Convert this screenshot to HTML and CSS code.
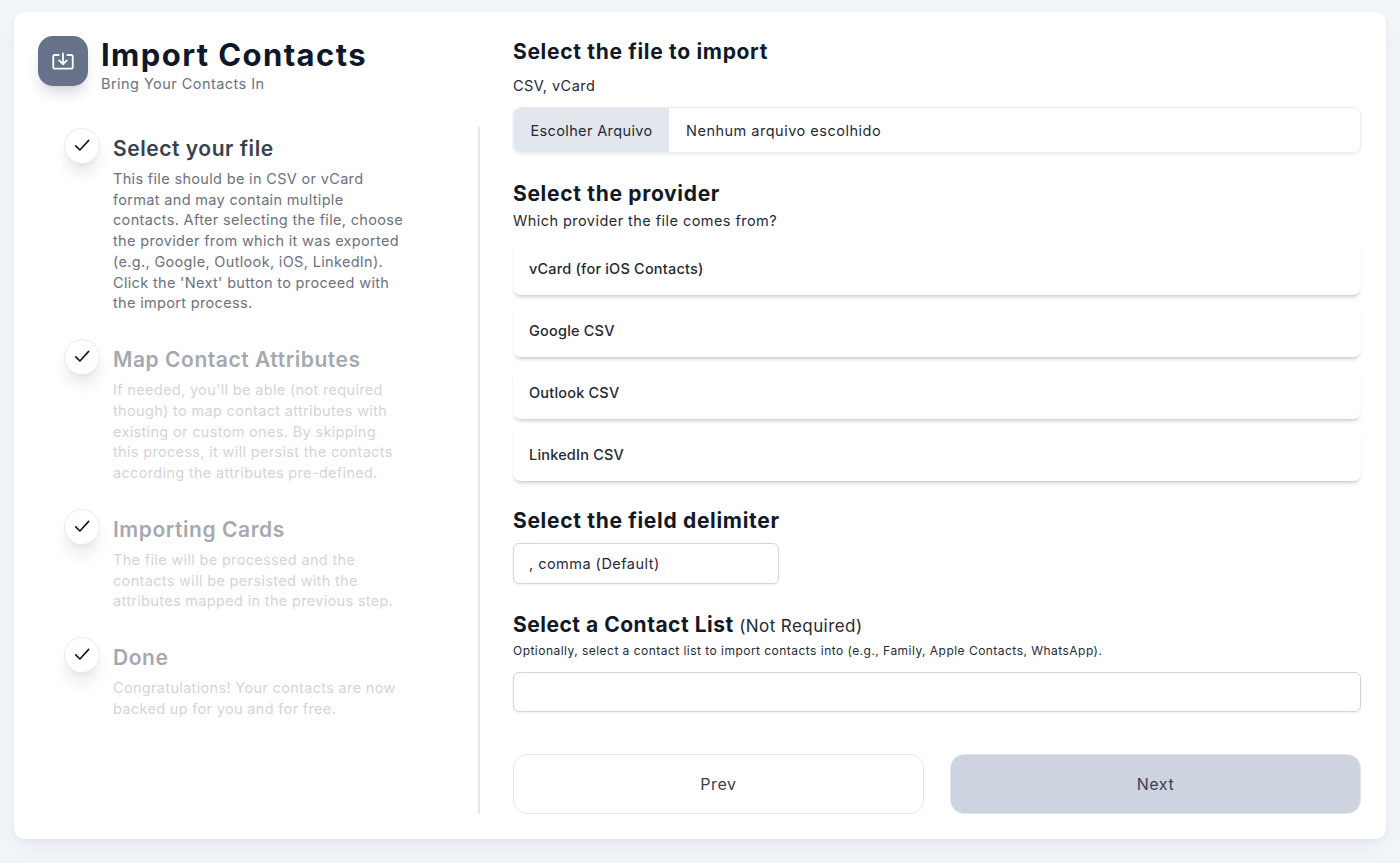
FILE: index.html
```html
<!DOCTYPE html>
<html lang="en">
<head>
<meta charset="utf-8">
<title>Import Contacts</title>
<link rel="stylesheet" href="styles.css">
</head>
<body>
<main class="card">
  <aside class="side">
    <header class="brand">
      <div class="brand-icon">
        <svg viewBox="0 0 24 24" width="26" height="26" fill="none" stroke="#f8fafc" stroke-width="1.7" stroke-linecap="round" stroke-linejoin="round"><path d="M8 6.500H4.500A1.500 1.500 0 0 0 3 8v9.500A1.500 1.500 0 0 0 4.500 19h15a1.500 1.500 0 0 0 1.500-1.500V8a1.500 1.500 0 0 0-1.500-1.500H16"/><path d="M12 5v10M8.500 11.500 12 15l3.500-3.500"/></svg>
      </div>
      <div>
        <h1 class="brand-title">Import Contacts</h1>
        <p class="brand-sub">Bring Your Contacts In</p>
      </div>
    </header>
    <ol class="steps">
      <li class="step">
        <span class="dot"><svg viewBox="0 0 24 24" width="20" height="20" fill="none" stroke="#111827" stroke-width="2" stroke-linecap="round" stroke-linejoin="round"><path d="M4.500 13l5 5L20 6.500"/></svg></span>
        <div class="step-body">
          <h3 class="step-title">Select your file</h3>
          <p class="step-text">This file should be in CSV or vCard<br>format and may contain multiple<br>contacts. After selecting the file, choose<br>the provider from which it was exported<br>(e.g., Google, Outlook, iOS, LinkedIn).<br>Click the 'Next' button to proceed with<br>the import process.</p>
        </div>
      </li>
      <li class="step step-off">
        <span class="dot"><svg viewBox="0 0 24 24" width="20" height="20" fill="none" stroke="#111827" stroke-width="2" stroke-linecap="round" stroke-linejoin="round"><path d="M4.500 13l5 5L20 6.500"/></svg></span>
        <div class="step-body">
          <h3 class="step-title">Map Contact Attributes</h3>
          <p class="step-text">If needed, you'll be able (not required<br>though) to map contact attributes with<br>existing or custom ones. By skipping<br>this process, it will persist the contacts<br>according the attributes pre-defined.</p>
        </div>
      </li>
      <li class="step step-off">
        <span class="dot"><svg viewBox="0 0 24 24" width="20" height="20" fill="none" stroke="#111827" stroke-width="2" stroke-linecap="round" stroke-linejoin="round"><path d="M4.500 13l5 5L20 6.500"/></svg></span>
        <div class="step-body">
          <h3 class="step-title">Importing Cards</h3>
          <p class="step-text">The file will be processed and the<br>contacts will be persisted with the<br>attributes mapped in the previous step.</p>
        </div>
      </li>
      <li class="step step-off">
        <span class="dot"><svg viewBox="0 0 24 24" width="20" height="20" fill="none" stroke="#111827" stroke-width="2" stroke-linecap="round" stroke-linejoin="round"><path d="M4.500 13l5 5L20 6.500"/></svg></span>
        <div class="step-body">
          <h3 class="step-title">Done</h3>
          <p class="step-text">Congratulations! Your contacts are now<br>backed up for you and for free.</p>
        </div>
      </li>
    </ol>
  </aside>
  <section class="form">
    <h2 class="label">Select the file to import</h2>
    <p class="hint hint-file">CSV, vCard</p>
    <div class="file">
      <span class="file-btn">Escolher Arquivo</span>
      <span class="file-name">Nenhum arquivo escolhido</span>
    </div>
    <h2 class="label label-provider">Select the provider</h2>
    <p class="hint hint-provider">Which provider the file comes from?</p>
    <div class="options">
      <div class="option">vCard (for iOS Contacts)</div>
      <div class="option">Google CSV</div>
      <div class="option">Outlook CSV</div>
      <div class="option">LinkedIn CSV</div>
    </div>
    <h2 class="label label-delim">Select the field delimiter</h2>
    <div class="select">, comma (Default)</div>
    <h2 class="label label-list">Select a Contact List <span class="label-note">(Not Required)</span></h2>
    <p class="hint-small">Optionally, select a contact list to import contacts into (e.g., Family, Apple Contacts, WhatsApp).</p>
    <div class="list-input"></div>
    <div class="actions">
      <button class="btn btn-prev" type="button">Prev</button>
      <button class="btn btn-next" type="button">Next</button>
    </div>
  </section>
</main>
</body>
</html>
```
FILE: styles.css
```css
* { box-sizing: border-box; }
html, body { margin: 0; height: 100%; }
body {
  background: #f1f5fa;
  padding: 12px 14px 24px;
  font-family: "Inter", "Noto Sans", sans-serif;
  color: #111827;
  overflow: hidden;
}
h1, h2, h3, p, ol { margin: 0; padding: 0; }
ol { list-style: none; }

.card {
  display: flex;
  height: 827px;
  background: #fff;
  border-radius: 10px;
  box-shadow: 0 10px 20px -5px rgba(15, 23, 42, .06), 0 2px 6px rgba(15, 23, 42, .03);
}

.side {
  width: 466px;
  flex: none;
  padding: 24px 0 25px 24px;
  display: flex;
  flex-direction: column;
}
.brand { display: flex; gap: 13px; height: 67px; }
.brand-icon {
  width: 50px;
  height: 50px;
  border-radius: 15px;
  background: #667289;
  display: flex;
  align-items: center;
  justify-content: center;
  box-shadow: 0 10px 15px -3px rgba(15, 23, 42, .15), 0 4px 6px -4px rgba(15, 23, 42, .1);
}
.brand-title {
  font-size: 31px;
  line-height: 36px;
  font-weight: 700;
  color: #0f172a;
  letter-spacing: 1.4px;
  white-space: nowrap;
  margin-top: 1px;
}
.brand-sub {
  font-size: 14.500px;
  line-height: 20px;
  margin-top: 1px;
  color: #6b7280;
  letter-spacing: .45px;
}

.steps {
  flex: 1;
  margin-top: 24px;
  padding: 1px 0 0 26px;
  border-right: 2px solid #e5e7eb;
}
.step { display: flex; gap: 13px; margin-bottom: 25.200px; }
.dot {
  width: 36px;
  height: 36px;
  flex: none;
  border-radius: 50%;
  background: #fff;
  border: 1px solid #e9ebef;
  display: flex;
  align-items: center;
  justify-content: center;
  box-shadow: 0 12px 18px -4px rgba(15, 23, 42, .12), 0 4px 6px -4px rgba(15, 23, 42, .08);
}
.dot svg { margin-top: -2px; }
.step-title {
  font-size: 21px;
  line-height: 28px;
  font-weight: 600;
  margin-top: 7px;
  color: #374151;
  letter-spacing: .55px;
  white-space: nowrap;
}
.step-text {
  font-size: 14.500px;
  line-height: 20.700px;
  margin-top: 6px;
  color: #6b7280;
  white-space: nowrap;
  letter-spacing: .33px;
}
.step-off .step-title { opacity: .45; }
.step-off .step-text { opacity: .3; }

.form {
  flex: 1;
  padding: 25px 25px 25px 33px;
  display: flex;
  flex-direction: column;
  min-width: 0;
}
.label {
  font-size: 21px;
  line-height: 28px;
  padding-top: 1px;
  margin-bottom: -1px;
  font-weight: 700;
  color: #111827;
  letter-spacing: .68px;
  white-space: nowrap;
}
.label-note { font-size: 17px; font-weight: 400; color: #1f2937; letter-spacing: .43px; }
.hint {
  font-size: 14.500px;
  line-height: 20px;
  color: #1f2937;
  letter-spacing: .45px;
}
.hint-file { margin-top: 11px; }
.hint-provider { margin-top: 4px; }
.hint-small {
  font-size: 12px;
  line-height: 16px;
  margin-top: 4px;
  color: #1f2937;
  letter-spacing: .47px;
  white-space: nowrap;
}

.file {
  margin-top: 11px;
  height: 47px;
  display: flex;
  align-items: center;
  border: 1px solid #eceef2;
  border-radius: 8px;
  overflow: hidden;
  font-size: 14.500px;
  letter-spacing: .5px;
  box-shadow: 0 1px 3px rgba(15, 23, 42, .1);
}
.file-btn {
  width: 155px;
  height: 100%;
  flex: none;
  display: flex;
  align-items: center;
  justify-content: center;
  background: #e2e6ed;
  color: #1f2937;
  letter-spacing: .38px;
}
.file-name { padding-left: 17px; color: #1f2937; }
.label-provider { margin-top: 26px; }

.options { margin-top: 10px; display: flex; flex-direction: column; gap: 8px; }
.option {
  height: 54px;
  padding: 0 16px;
  display: flex;
  align-items: center;
  border-radius: 8px;
  font-size: 14.500px;
  font-weight: 450;
  letter-spacing: .2px;
  color: #1f2937;
  background: #fff;
  box-shadow: 0 4px 4px -2px rgba(15, 23, 42, .2), 0 1px 2px rgba(15, 23, 42, .04);
}
.label-delim { margin-top: 25px; }
.select {
  margin-top: 9px;
  width: 266px;
  height: 41px;
  padding: 0 15px;
  display: flex;
  align-items: center;
  border: 1px solid #d1d5db;
  border-radius: 6px;
  font-size: 14.500px;
  letter-spacing: .47px;
  color: #1f2937;
  box-shadow: 0 1px 2px rgba(15, 23, 42, .08);
}
.label-list { margin-top: 26px; letter-spacing: .5px; }
.list-input {
  margin-top: 13px;
  height: 41px;
  border: 1px solid #d1d5db;
  border-radius: 6px;
  box-shadow: 0 1px 2px rgba(15, 23, 42, .08);
}
.actions { margin-top: 42px; display: flex; gap: 26px; }
.btn {
  flex: 1;
  height: 60px;
  border-radius: 14px;
  font-family: inherit;
  font-size: 16px;
  letter-spacing: .6px;
  color: #374151;
}
.btn-prev { background: #fff; border: 1px solid #e5e7eb; }
.btn-next { background: #cdd3df; border: 1px solid #e2e6ed; }
```
